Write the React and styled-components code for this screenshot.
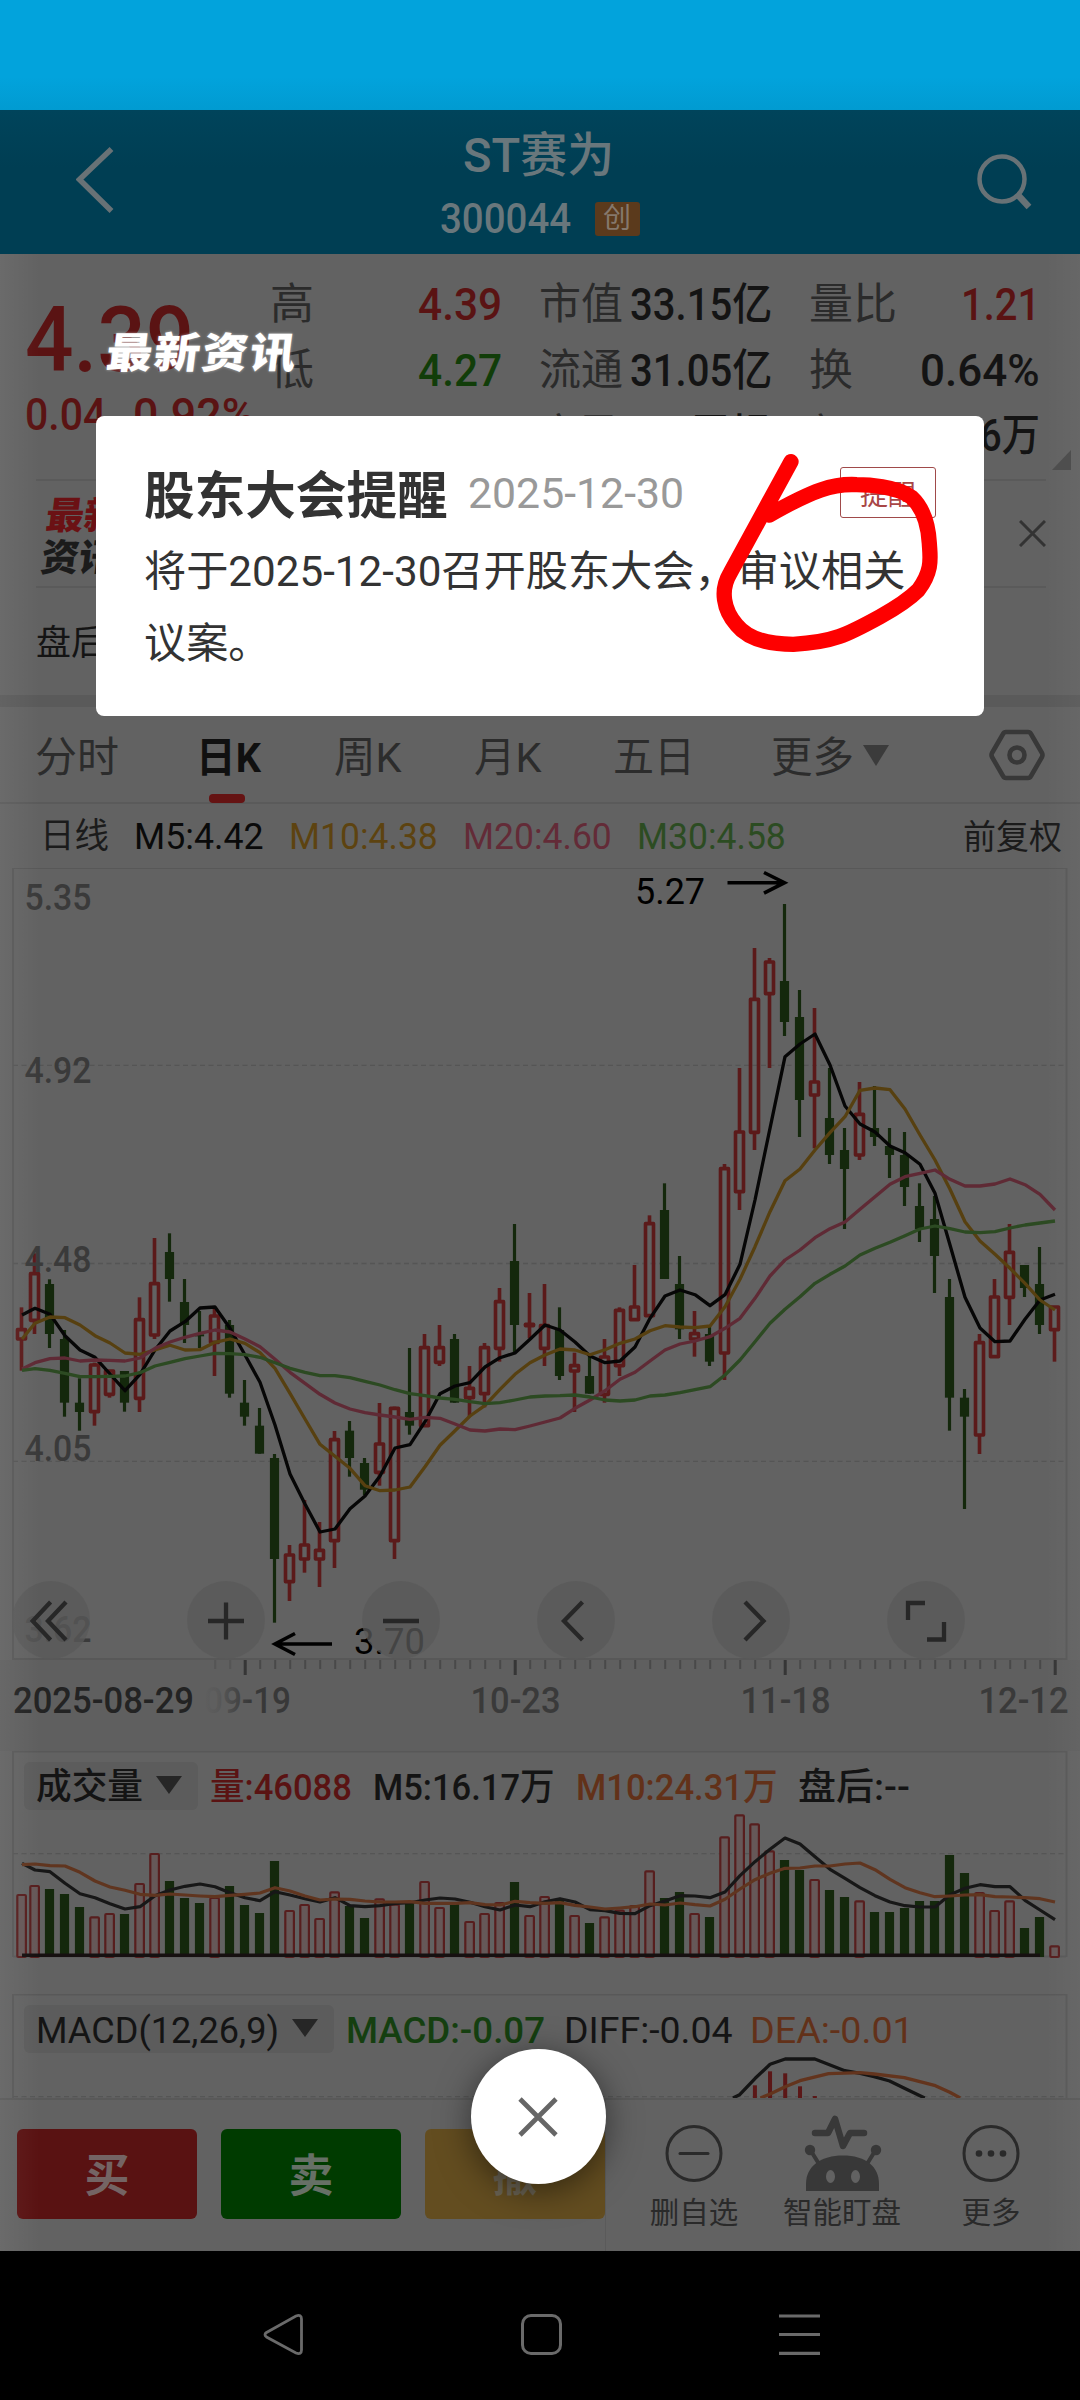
import React, { useLayoutEffect, useRef, useState } from "react";
import styled, { createGlobalStyle } from "styled-components";

const Global = createGlobalStyle`
  * { box-sizing: border-box; }
  body {
    margin: 0;
    background: #000;
    font-family: Roboto, "Noto Sans CJK SC", sans-serif;
  }
`;

const c = {
  bg: "#626262",
  line: "#585858",
  ink: "#141414",
  label: "#2b2b2b",
  red: "#5a1313",
  green: "#113d09",
  candleRed: "#5b1a1a",
  candleGreen: "#14280c",
  orange: "#623119",
};

/* ---------- text that fills a given width ---------- */

const FitBox = styled.span`
  display: inline-block;
  flex: none;
  width: ${(p) => p.$w}px;
  height: ${(p) => p.$size}px;
  font-size: ${(p) => p.$size}px;
  font-weight: ${(p) => p.$weight || 400};
  line-height: 1;
  color: ${(p) => p.$color};
  white-space: nowrap;
`;
const FitInner = styled.span`
  display: inline-block;
  transform-origin: 0 0;
  white-space: pre;
`;
function Fit({ w, size, weight, color, children }) {
  const ref = useRef(null);
  const [k, setK] = useState(1);
  useLayoutEffect(() => {
    if (ref.current) setK(w / ref.current.offsetWidth);
  }, [w, size, children]);
  return (
    <FitBox $w={w} $size={size} $weight={weight} $color={color}>
      <FitInner ref={ref} style={{ transform: `scaleX(${k})` }}>
        {children}
      </FitInner>
    </FitBox>
  );
}

/* ---------- page frame ---------- */

const Screen = styled.div`
  position: relative;
  display: flex;
  flex-direction: column;
  width: 1080px;
  height: 2400px;
  overflow: hidden;
  background: ${c.bg};
`;
const EdgeGlow = styled.div`
  position: absolute;
  inset: 254px 0 149px;
  pointer-events: none;
  background: linear-gradient(
    90deg,
    rgba(255, 255, 255, 0.055),
    rgba(255, 255, 255, 0) 40px,
    rgba(255, 255, 255, 0) 1045px,
    rgba(255, 255, 255, 0.03)
  );
`;
const StatusBar = styled.div`
  flex: none;
  height: 110px;
  background: linear-gradient(#02a3dc 70%, #019bd1);
`;
const Header = styled.header`
  flex: none;
  display: flex;
  justify-content: space-between;
  height: 144px;
  padding: 0 48px 0 76px;
  background: linear-gradient(#00445b, #003e53 40%);
`;
const HeaderIcon = styled.div`
  width: 58px;
  padding-top: ${(p) => p.$top}px;
`;
const TitleBlock = styled.div`
  display: flex;
  flex-direction: column;
  align-items: center;
  gap: 18px;
  padding-top: 22px;
  margin-right: 29px;
`;
const TitleLine = styled.div`
  display: flex;
  padding-right: 3px;
`;
const CodeRow = styled.div`
  display: flex;
  align-items: center;
  gap: 24px;
`;
const BoardBadge = styled.span`
  display: flex;
  align-items: center;
  justify-content: center;
  width: 45px;
  height: 34px;
  border-radius: 3px;
  background: #5b3a1c;
  color: #85786c;
  font-size: 28px;
  line-height: 1;
`;

/* ---------- quote ---------- */

const Quote = styled.section`
  flex: none;
  display: grid;
  grid-template-columns: 208px 232px 233px 231px;
  column-gap: 37px;
  height: 225px;
  padding-left: 25px;
`;
const PriceCol = styled.div`
  display: flex;
  flex-direction: column;
  gap: 7px;
  padding-top: 42px;
`;
const ChangeRow = styled.div`
  display: flex;
  gap: 27px;
`;
const StatCol = styled.div`
  display: flex;
  flex-direction: column;
  gap: 22.5px;
  padding-top: 29px;
`;
const Stat = styled.div`
  display: flex;
  justify-content: space-between;
  height: 43px;
`;

/* ---------- news ---------- */

const NewsRow = styled.section`
  flex: none;
  display: flex;
  justify-content: space-between;
  align-items: center;
  height: 109px;
  margin: 0 34px 0 36px;
  padding-left: 8px;
  border-top: 2px solid #5a5a5a;
  border-bottom: 2px solid #5a5a5a;
`;
const NewsLogo = styled.div`
  display: grid;
  gap: 4px;
  color: ${(p) => p.$color};
  font: 900 38px/1 "Noto Sans CJK SC", sans-serif;
  transform: skewX(-7deg);
  span:first-child { color: #6b1114; }
`;
const AfterHours = styled.div`
  flex: none;
  height: 107px;
  padding: 38px 36px 0;
  color: ${c.ink};
  font-size: 35px;
  line-height: 1;
`;
const Band = styled.div`
  flex: none;
  height: 12px;
  background: #5a5a5a;
`;

/* ---------- tabs ---------- */

const Tabs = styled.nav`
  flex: none;
  position: relative;
  display: flex;
  height: 97px;
  padding: 30px 35px 0 35px;
  border-bottom: 2px solid #5a5a5a;
`;
const Tab = styled.div`
  position: relative;
  display: flex;
  margin-right: ${(p) => p.$gap}px;
`;
const HexIcon = styled.svg`
  display: block;
  flex: none;
  margin-top: -8px;
`;
const Underline = styled.i`
  position: absolute;
  left: 13px;
  top: 57px;
  width: 36px;
  height: 9px;
  border-radius: 4px;
  background: #651313;
`;
const MaRow = styled.div`
  flex: none;
  display: flex;
  gap: ${(p) => p.$gap || 24}px;
  height: 64px;
  padding: 15px 0 0 40px;
`;
const PushRight = styled.span`
  margin: 1px 18px 0 auto;
`;

/* ---------- charts ---------- */

const ChartArea = styled.section`
  flex: none;
  position: relative;
  height: 883px;
`;
const Tools = styled.div`
  position: absolute;
  left: 12px;
  top: 713px;
  display: flex;
  gap: 97px;
`;
const Tool = styled.div`
  display: flex;
  align-items: center;
  justify-content: center;
  width: 78px;
  height: 78px;
  border-radius: 50%;
  background: rgba(90, 90, 90, 0.76);
`;
const SubPanel = styled.section`
  flex: none;
  position: relative;
  height: ${(p) => p.$h}px;
  overflow: hidden;
`;
const SubHead = styled.div`
  position: relative;
  display: flex;
  align-items: flex-start;
  padding: 11px 0 0 24px;
`;
const Chip = styled.div`
  display: flex;
  align-items: center;
  justify-content: space-between;
  width: ${(p) => p.$w}px;
  height: 48px;
  margin-right: 12px;
  padding: 2px 15px 0 12px;
  border-radius: 6px;
  background: #5c5c5c;
  svg { margin-top: -4px; }
`;
const Item = styled.span`
  padding-top: 7px;
  margin-right: ${(p) => p.$gap}px;
`;
const Layer = styled.svg`
  position: absolute;
  left: 0;
  top: 0;
  display: block;
`;

/* ---------- footer ---------- */

const Footer = styled.footer`
  flex: none;
  display: flex;
  height: 153px;
  border-top: 2px solid #595959;
`;
const Trade = styled.div`
  display: flex;
  gap: 24px;
  width: 606px;
  padding: 29px 0 0 17px;
  border-right: 1px solid #5a5a5a;
`;
const TradeButton = styled.div`
  flex: none;
  display: flex;
  align-items: center;
  justify-content: center;
  width: 180px;
  height: 90px;
  padding-top: 5px;
  border-radius: 6px;
  background: ${(p) => p.$bg};
  color: ${(p) => p.$fg};
  font-size: 45px;
  font-weight: 700;
  line-height: 1;
`;
const Action = styled.div`
  display: flex;
  flex-direction: column;
  align-items: center;
  width: ${(p) => p.$w}px;
  margin-left: ${(p) => p.$ml}px;
  color: #2a2a2a;
  font-size: 29.5px;
  line-height: 1;
  white-space: nowrap;
  svg { display: block; margin-bottom: 5px; }
`;
const SystemNav = styled.div`
  flex: none;
  height: 149px;
  display: flex;
  padding: 62px 0 0 263px;
  background: #000;
`;
const NavKey = styled.div`
  width: ${(p) => p.$w}px;
`;

/* ---------- floating layer ---------- */

const Toast = styled.div`
  position: absolute;
  left: 107px;
  top: 327px;
  color: #fff;
  font: 900 46px/1 "Noto Sans CJK SC", sans-serif;
  letter-spacing: 1.8px;
  white-space: nowrap;
  transform: skewX(-7deg) scaleY(0.92);
  text-shadow: 0 0 3px rgba(255, 255, 255, 0.55);
`;
const Dialog = styled.div`
  position: absolute;
  left: 96px;
  top: 416px;
  width: 888px;
  height: 300px;
  padding: 50px 48px 0 48px;
  border-radius: 8px;
  background: #fff;
`;
const DialogHead = styled.div`
  display: flex;
  align-items: center;
  height: 56px;
`;
const DialogTitle = styled.h1`
  margin: 0 20px 0 0;
  padding-top: 6px;
  color: #333;
  font-size: 50.6px;
  font-weight: 600;
  line-height: 1;
`;
const Tag = styled.div`
  display: flex;
  align-items: center;
  justify-content: center;
  width: 96px;
  height: 51px;
  margin: -4px 0 0 auto;
  padding-top: 7px;
  border: 1px solid #a04a4a;
  border-radius: 3px;
  color: #a84646;
  font-size: 28px;
  line-height: 1;
`;
const DialogBody = styled.p`
  margin: 14px -12px 0 0;
  color: #333;
  font-size: 42.2px;
  line-height: 71.5px;
`;
const Scribble = styled.svg`
  position: absolute;
  left: 700px;
  top: 440px;
`;
const Close = styled.div`
  position: absolute;
  left: 471px;
  top: 2049px;
  display: flex;
  align-items: center;
  justify-content: center;
  width: 135px;
  height: 135px;
  padding-right: 2px;
  border-radius: 50%;
  background: #fff;
  box-shadow: 0 6px 34px rgba(0, 0, 0, 0.5);
`;
const Corner = styled.i`
  position: absolute;
  left: 1052px;
  top: 450px;
  border-left: 19px solid transparent;
  border-bottom: 20px solid #4e4e4e;
`;

/* ---------- data: [up, high, open/close top, open/close bottom, low] ---------- */

const candles = [
  [1, 262, 326, 360, 452], [1, 100, 158, 304, 342], [0, 178, 192, 342, 384], [0, 330, 357, 548, 590],
  [0, 475, 548, 576, 632], [1, 428, 432, 578, 617], [1, 450, 450, 526, 533], [0, 453, 453, 548, 575],
  [1, 232, 296, 538, 576], [1, 54, 188, 348, 357], [0, 40, 96, 177, 245], [0, 177, 246, 315, 369],
  [0, 273, 343, 348, 384], [1, 262, 285, 370, 468], [0, 300, 315, 521, 533], [0, 480, 548, 590, 617],
  [0, 564, 617, 701, 701], [0, 702, 714, 1017, 1208], [1, 975, 1002, 1088, 1143], [1, 840, 972, 1020, 1058],
  [1, 906, 988, 1020, 1101], [1, 633, 656, 965, 1044], [0, 603, 632, 714, 770], [0, 714, 729, 809, 825],
  [1, 549, 669, 760, 797], [1, 560, 562, 965, 1017], [0, 384, 576, 617, 644], [1, 342, 380, 620, 620],
  [1, 315, 380, 430, 438], [0, 342, 357, 548, 548], [1, 438, 502, 536, 590], [1, 369, 380, 524, 562],
  [1, 204, 242, 388, 425], [0, 12, 123, 315, 398], [1, 219, 310, 320, 355], [1, 192, 314, 388, 438],
  [0, 262, 330, 468, 480], [1, 398, 434, 456, 576], [0, 408, 468, 521, 521], [1, 357, 408, 526, 548],
  [1, 262, 268, 440, 468], [1, 135, 258, 302, 302], [1, -14, 8, 290, 290], [0, -110, -30, 177, 177],
  [0, 108, 192, 328, 357], [1, 273, 338, 360, 410], [0, 315, 342, 425, 438], [1, -168, -157, 402, 480],
  [1, -456, -267, -82, -30], [1, -816, -665, -260, -210], [1, -786, -777, -676, -456], [0, -948, -717, -594, -552],
  [0, -690, -609, -360, -249], [1, -636, -417, -372, -215], [0, -456, -306, -195, -168], [0, -276, -210, -153, 27],
  [1, -414, -320, -192, -180], [0, -402, -276, -249, -222], [0, -276, -222, -195, -126], [0, -264, -195, -99, -42],
  [0, -110, -42, 27, 66], [0, -72, -3, 108, 219], [0, 177, 231, 533, 632], [0, 507, 533, 590, 867],
  [1, 342, 365, 648, 702], [1, 177, 228, 413, 413], [1, 12, 94, 235, 315], [0, 135, 135, 204, 231],
  [0, 81, 192, 315, 342], [1, 258, 258, 332, 425],
];
const ma5 = [285, 265, 283, 347, 390, 412, 462, 512, 463, 390, 333, 305, 264, 261, 325, 405, 487, 615, 762, 852, 936, 927, 866, 828, 768, 684, 674, 605, 521, 498, 488, 441, 413, 399, 358, 315, 330, 366, 408, 428, 423, 381, 295, 228, 210, 224, 257, 224, 133, -60, -275, -490, -528, -558, -465, -342, -288, -264, -222, -202, -167, -80, 75, 232, 324, 365, 363, 298, 240, 223];
const ma10 = [357, 310, 291, 293, 315, 347, 369, 399, 403, 390, 376, 390, 389, 367, 357, 370, 398, 445, 520, 597, 673, 709, 745, 797, 812, 810, 801, 740, 676, 632, 588, 556, 508, 463, 428, 405, 387, 390, 404, 389, 370, 357, 332, 317, 321, 323, 318, 260, 178, 80, -25, -118, -153, -210, -262, -310, -389, -396, -391, -333, -255, -180, -92, 5, 63, 103, 145, 190, 240, 270];
const ma20 = [447, 428, 416, 414, 423, 420, 421, 423, 414, 385, 366, 352, 340, 330, 336, 357, 380, 418, 457, 490, 523, 549, 567, 578, 585, 591, 598, 592, 595, 612, 630, 633, 627, 629, 618, 606, 594, 565, 540, 512, 478, 457, 423, 390, 372, 363, 350, 325, 295, 235, 168, 120, 90, 53, 26, 6, -32, -70, -107, -130, -140, -150, -122, -102, -102, -108, -123, -106, -77, -30];
const ma30 = [451, 446, 451, 460, 470, 470, 469, 468, 458, 438, 427, 416, 408, 400, 401, 404, 412, 428, 445, 457, 467, 467, 473, 484, 495, 509, 521, 527, 534, 538, 545, 551, 548, 540, 531, 528, 527, 525, 531, 540, 543, 540, 528, 525, 518, 509, 500, 465, 420, 365, 310, 268, 230, 190, 163, 138, 105, 85, 67, 47, 27, 18, 26, 36, 38, 35, 24, 15, 9, 3];

const volumes = [465, 438, 447, 462, 501, 532, 522, 522, 432, 342, 423, 474, 489, 474, 438, 495, 519, 363, 513, 495, 537, 457, 498, 534, 478, 494, 486, 426, 504, 492, 546, 522, 489, 426, 528, 471, 480, 528, 549, 532, 512, 498, 394, 474, 456, 522, 531, 292, 226, 253, 334, 360, 390, 420, 450, 471, 484, 516, 516, 504, 483, 483, 345, 399, 459, 513, 484, 564, 531, 619];
const vol5 = [370, 390, 395, 430, 461, 473, 491, 507, 500, 467, 450, 439, 432, 440, 458, 473, 482, 455, 465, 476, 486, 473, 497, 500, 497, 490, 488, 480, 474, 477, 487, 500, 510, 495, 500, 485, 476, 486, 509, 512, 520, 521, 497, 483, 467, 468, 473, 456, 407, 365, 328, 294, 312, 350, 388, 415, 443, 467, 486, 497, 501, 501, 464, 445, 434, 440, 440, 481, 510, 539];
const vol10 = [374, 372, 377, 378, 397, 423, 441, 451, 463, 466, 462, 465, 468, 470, 466, 463, 459, 443, 453, 468, 480, 477, 478, 483, 486, 486, 485, 490, 490, 490, 488, 494, 495, 484, 488, 490, 488, 496, 501, 507, 504, 500, 492, 495, 489, 494, 498, 478, 447, 419, 400, 385, 384, 378, 378, 372, 369, 389, 418, 443, 458, 470, 468, 465, 464, 470, 471, 473, 476, 486];

const px = (i) => (i === 0 ? 21.5 : 19.5 + 15 * i);
const py = (v) => (v + 1056) / 3;
const vy = (v) => (v - 33) / 3;
const toPoints = (arr, f) => arr.map((v, i) => `${px(i) + 0.5},${f(v).toFixed(1)}`).join(" ");

function Label({ x, y, w, size = 36.5, weight = 500, fill = "#3a3a3a", children }) {
  return (
    <text x={x} y={y} fontSize={size} fontWeight={weight} fill={fill} textLength={w} lengthAdjust="spacingAndGlyphs">
      {children}
    </text>
  );
}

function Grid({ y }) {
  return <line x1="13" x2="1066" y1={y} y2={y} stroke="#555" strokeWidth="1.3" strokeDasharray="5 3.5" />;
}

function Candle({ i, d }) {
  const [up, hi, top, bot, lo] = d;
  const x = px(i);
  if (!up)
    return (
      <g fill={c.candleGreen}>
        <rect x={x - 1.6} y={py(hi)} width="3.2" height={py(lo) - py(hi)} />
        <rect x={x - 4.6} y={py(top)} width="9.2" height={Math.max(2, py(bot) - py(top))} />
      </g>
    );
  return (
    <g stroke={c.candleRed} strokeWidth="3.6" fill="none" strokeLinejoin="round">
      <line x1={x} x2={x} y1={py(hi)} y2={py(top)} />
      <line x1={x} x2={x} y1={py(bot)} y2={py(lo)} />
      <rect x={x - 4} y={py(top) + 1} width="8" height={Math.max(1, py(bot) - py(top) - 2)} />
    </g>
  );
}

function KLine() {
  const ticks = [];
  for (let i = 13; i <= 69; i++) {
    const major = (i - 15) % 18 === 0;
    ticks.push(
      <line
        key={i}
        x1={px(i) + 0.7}
        x2={px(i) + 0.7}
        y1="792"
        y2={major ? 807 : 801}
        stroke={major ? "#363636" : "#494949"}
        strokeOpacity={i < 15 ? 0.45 : 1}
        strokeWidth={major ? 3 : 2}
      />
    );
  }
  return (
    <Layer width="1080" height="883" fontFamily="Roboto, sans-serif">
      <defs>
        <linearGradient id="fade" x1="205" x2="250" y1="0" y2="0" gradientUnits="userSpaceOnUse">
          <stop offset="0" stopColor="#383838" stopOpacity="0.02" />
          <stop offset="0.3" stopColor="#383838" stopOpacity="0.15" />
          <stop offset="1" stopColor="#383838" />
        </linearGradient>
      </defs>
      <rect x="0" y="792" width="1080" height="91" fill="#5f5f5f" />
      <rect x="13" y="0" width="1053.5" height="791" fill="none" stroke={c.line} strokeWidth="2" />
      <Grid y={197.3} />
      <Grid y={395.5} />
      <Grid y={593.3} />
      {candles.map((d, i) => <Candle key={i} i={i} d={d} />)}
      <Label x={24.5} y={42} w={67}>5.35</Label>
      <Label x={24.5} y={214.7} w={67}>4.92</Label>
      <Label x={24.5} y={403.7} w={67}>4.48</Label>
      <Label x={24.5} y={592.7} w={67}>4.05</Label>
      <Label x={24.5} y={773.7} w={67}>3.62</Label>
      <g fill="none" strokeWidth="3.3" strokeLinejoin="round">
        <polyline points={toPoints(ma5, py)} stroke="#060606" />
        <polyline points={toPoints(ma10, py)} stroke="#574010" />
        <polyline points={toPoints(ma20, py)} stroke="#5f2a35" />
        <polyline points={toPoints(ma30, py)} stroke="#2c4a22" />
      </g>
      <g stroke="#000" strokeWidth="3.6" fill="none">
        <path d="M727.5 14.7H783M764 4.500l20.500 10.200L764 25.200" />
        <path d="M332 776H276M295 765.500L275 776l20 10.500" />
      </g>
      <Label x={635} y={36} w={70} size={36} weight={400} fill="#000">5.27</Label>
      <Label x={354} y={786} w={71} size={36} weight={400} fill="#000">3.70</Label>
      {ticks}
      <Label x={13} y={844.5} w={181} size={36} fill="#232323">2025-08-29</Label>
      <Label x={204} y={844.5} w={87} size={36} fill="url(#fade)">09-19</Label>
      <Label x={470.5} y={844.5} w={90} size={36}>10-23</Label>
      <Label x={740.5} y={844.5} w={90} size={36}>11-18</Label>
      <Label x={978.5} y={844.5} w={90} size={36}>12-12</Label>
    </Layer>
  );
}

const toolPaths = [
  "M38.600 21L20.700 40L38.600 59M54 21L36 40L54 59",
  "M39 21.500V58.500M21 40H57",
  "M21 40H57",
  "M45.500 21L27 40L45.500 59",
  "M33 21L51.500 40L33 59",
  "M38 22H21V39M57 41V58.500H40",
];

function Volume() {
  return (
    <Layer width="1080" height="243">
      <path d="M13 206V0.500H1066.500V206" fill="none" stroke={c.line} strokeWidth="2" />
      <line x1="13" x2="1066" y1="205.500" y2="205.500" stroke={c.line} strokeWidth="2" />
      <Grid y={102.700} />
      {volumes.map((v, i) => {
        const up = candles[i][0];
        const y = vy(v);
        return up ? (
          <rect key={i} x={px(i) - 4.2} y={y} width="8.6" height={206 - y} rx="1" fill="#665858" stroke="#571e1e" strokeWidth="2.2" />
        ) : (
          <rect key={i} x={px(i) - 4.6} y={y} width="9.2" height={206 - y} fill={c.candleGreen} />
        );
      })}
      <line x1="22" x2="1040" y1="204.300" y2="204.300" stroke="#161010" strokeWidth="3.500" />
      <g fill="none" strokeWidth="3.200" strokeLinejoin="round">
        <polyline points={toPoints(vol5, vy)} stroke="#171717" />
        <polyline points={toPoints(vol10, vy)} stroke="#60351f" />
      </g>
    </Layer>
  );
}

const mx = (x) => x / 2.9037 + 540;
const my = (y) => (y - 762) / 3;
const diff = [[560, 1074], [580, 1064], [625, 1015], [668, 973], [712, 957], [798, 957], [885, 992], [930, 1000], [970, 1010], [1015, 1023], [1058, 1045], [1117, 1074]];
const dea = [[640, 1074], [668, 1062], [712, 1040], [755, 1022], [838, 1001], [930, 998], [970, 1002], [1058, 1013], [1148, 1037], [1190, 1057], [1220, 1074]];
const hist = [[624, 1036], [668, 994], [712, 1000], [755, 1039], [798, 1068]];
const macdPoints = (a) => a.map(([x, y]) => `${mx(x).toFixed(1)},${my(y).toFixed(1)}`).join(" ");

function Macd() {
  return (
    <Layer width="1080" height="104">
      <path d="M13 105V0.500H1066.500V105" fill="none" stroke={c.line} strokeWidth="2" />
      <Grid y={102.700} />
      {hist.map(([x, y]) => (
        <rect key={x} x={mx(x) - 2} y={my(y)} width="4" height={104 - my(y)} fill="#5b1717" />
      ))}
      <g fill="none" strokeWidth="3.300" strokeLinejoin="round">
        <polyline points={macdPoints(diff)} stroke="#141414" />
        <polyline points={macdPoints(dea)} stroke="#63341d" />
      </g>
    </Layer>
  );
}

const Caret = ({ color = "#262626" }) => (
  <svg width="28" height="20" viewBox="0 0 28 20">
    <path d="M1 1H27L14 19Z" fill={color} />
  </svg>
);

export default function App() {
  return (
    <>
      <Global />
      <Screen>
        <StatusBar />
        <Header>
          <HeaderIcon $top={37}>
            <svg width="40" height="66" fill="none" stroke="#687276" strokeWidth="5.500">
              <path d="M35.500 2L3.500 32.500L35.500 64" />
            </svg>
          </HeaderIcon>
          <TitleBlock>
            <TitleLine><Fit w={151} size={48} weight={500} color="#69777c">ST赛为</Fit></TitleLine>
            <CodeRow>
              <Fit w={131} size={42} weight={500} color="#69777c">300044</Fit>
              <BoardBadge>创</BoardBadge>
            </CodeRow>
          </TitleBlock>
          <HeaderIcon $top={44}>
            <svg width="58" height="58" fill="none" stroke="#687276" strokeWidth="4.500">
              <circle cx="28" cy="25" r="22.500" />
              <path d="M44 41L55 53" strokeWidth="6.500" />
            </svg>
          </HeaderIcon>
        </Header>

        <Quote>
          <PriceCol>
            <Fit w={169} size={90} weight={500} color={c.red}>4.39</Fit>
            <ChangeRow>
              <Fit w={81} size={44} weight={500} color={c.red}>0.04</Fit>
              <Fit w={122} size={44} weight={500} color={c.red}>0.92%</Fit>
            </ChangeRow>
          </PriceCol>
          <StatCol>
            <Stat><Fit w={44} size={43} color={c.label}>高</Fit><Fit w={84} size={44} weight={500} color={c.red}>4.39</Fit></Stat>
            <Stat><Fit w={44} size={43} color={c.label}>低</Fit><Fit w={84} size={44} weight={500} color={c.green}>4.27</Fit></Stat>
          </StatCol>
          <StatCol>
            <Stat><Fit w={84} size={43} color={c.label}>市值</Fit><Fit w={142} size={44} weight={500} color={c.ink}>33.15亿</Fit></Stat>
            <Stat><Fit w={84} size={43} color={c.label}>流通</Fit><Fit w={142} size={44} weight={500} color={c.ink}>31.05亿</Fit></Stat>
            <Stat><Fit w={84} size={43} color={c.label}>市盈</Fit><Fit w={82} size={44} weight={500} color={c.ink}>亏损</Fit></Stat>
          </StatCol>
          <StatCol>
            <Stat><Fit w={88} size={43} color={c.label}>量比</Fit><Fit w={79} size={44} weight={500} color={c.red}>1.21</Fit></Stat>
            <Stat><Fit w={44} size={43} color={c.label}>换</Fit><Fit w={120} size={44} weight={500} color={c.ink}>0.64%</Fit></Stat>
            <Stat><Fit w={44} size={43} color={c.label}>额</Fit><Fit w={125} size={44} weight={500} color={c.ink}>2006万</Fit></Stat>
          </StatCol>
        </Quote>

        <NewsRow>
          <NewsLogo $color="#1b1b1b"><span>最新</span><span>资讯</span></NewsLogo>
          <svg width="27" height="27" fill="none" stroke="#333" strokeWidth="3">
            <path d="M1 1L26 26M26 1L1 26" />
          </svg>
        </NewsRow>
        <AfterHours>盘后</AfterHours>
        <Band />

        <Tabs>
          <Tab $gap={77}><Fit w={84} size={41.5} color="#2c2c2c">分时</Fit></Tab>
          <Tab $gap={73}><Fit w={65} size={41.500} weight={700} color="#101010">日K</Fit><Underline /></Tab>
          <Tab $gap={72}><Fit w={68} size={41.5} color="#2c2c2c">周K</Fit></Tab>
          <Tab $gap={71}><Fit w={68} size={41.5} color="#2c2c2c">月K</Fit></Tab>
          <Tab $gap={76}><Fit w={82} size={41.5} color="#2c2c2c">五日</Fit></Tab>
          <Tab $gap={8}><Fit w={83} size={41.5} color="#2c2c2c">更多</Fit></Tab>
          <Tab $gap={99}>
            <svg width="28" height="34"><path d="M1 8H27L14 29Z" fill="#3b3b3b" /></svg>
          </Tab>
          <HexIcon width="56" height="52" viewBox="0 0 56 52" fill="none" stroke="#383838" strokeWidth="4.6" strokeLinejoin="round">
            <path d="M17 3H39Q41 3 42 5L53 24Q54 26 53 28L42 47Q41 49 39 49H17Q15 49 14 47L3 28Q2 26 3 24L14 5Q15 3 17 3Z" />
            <circle cx="28" cy="26" r="7.5" />
          </HexIcon>
        </Tabs>

        <MaRow $gap={25}>
          <Fit w={69} size={35} color="#1b1b1b">日线</Fit>
          <Fit w={130} size={36} color="#0a0a0a">M5:4.42</Fit>
          <Fit w={149} size={36} color="#5d4310">M10:4.38</Fit>
          <Fit w={149} size={36} color="#632b37">M20:4.60</Fit>
          <Fit w={149} size={36} color="#2c4c22">M30:4.58</Fit>
          <PushRight><Fit w={99} size={34} color="#1b1b1b">前复权</Fit></PushRight>
        </MaRow>

        <ChartArea>
          <KLine />
          <Tools>
            {toolPaths.map((d) => (
              <Tool key={d}>
                <svg width="78" height="78" fill="none" stroke="#272727" strokeWidth="4.300"><path d={d} /></svg>
              </Tool>
            ))}
          </Tools>
        </ChartArea>

        <SubPanel $h={243}>
          <Volume />
          <SubHead>
            <Chip $w={174}><Fit w={107} size={36} weight={500} color={c.ink}>成交量</Fit><Caret /></Chip>
            <Item $gap={21}><Fit w={142} size={37} weight={500} color={c.red}>量:46088</Fit></Item>
            <Item $gap={21}><Fit w={182} size={37} weight={500} color={c.ink}>M5:16.17万</Fit></Item>
            <Item $gap={20}><Fit w={202} size={37} weight={500} color={c.orange}>M10:24.31万</Fit></Item>
            <Item $gap={0}><Fit w={112} size={37} weight={500} color={c.ink}>盘后:--</Fit></Item>
          </SubHead>
        </SubPanel>

        <SubPanel $h={104}>
          <Macd />
          <SubHead>
            <Chip $w={310}><Fit w={243} size={37} weight={450} color={c.ink}>MACD(12,26,9)</Fit><Caret /></Chip>
            <Item $gap={19}><Fit w={199} size={37} weight={500} color="#153f10">MACD:-0.07</Fit></Item>
            <Item $gap={17}><Fit w={169} size={37} weight={450} color={c.ink}>DIFF:-0.04</Fit></Item>
            <Item $gap={0}><Fit w={164} size={37} weight={450} color={c.orange}>DEA:-0.01</Fit></Item>
          </SubHead>
        </SubPanel>

        <Footer>
          <Trade>
            <TradeButton $bg="#591212" $fg="#746464">买</TradeButton>
            <TradeButton $bg="#003b00" $fg="#667066">卖</TradeButton>
            <TradeButton $bg="#634d20" $fg="#6a6353">撤</TradeButton>
          </Trade>
          <Action $w={96} $ml={40}>
            <svg width="96" height="94" fill="none" stroke="#2a2a2a" strokeWidth="3">
              <circle cx="48" cy="53.500" r="27" />
              <path d="M34 53.500H62" strokeLinecap="round" />
            </svg>
            删自选
          </Action>
          <Action $w={120} $ml={40}>
            <svg width="120" height="94" fill="none" stroke="#383838" strokeLinecap="round" strokeLinejoin="round">
              <path d="M33 33H46L53 19L61 46L68 33H82" strokeWidth="6.500" />
              <path d="M29 51L37 64M93 51L85 64" strokeWidth="4" />
              <circle cx="28" cy="50" r="5.200" fill="#383838" stroke="none" />
              <circle cx="94" cy="50" r="5.200" fill="#383838" stroke="none" />
              <path d="M24 91V84C24 66 39 55.500 61 55.500S97 66 97 84V91Z" fill="#383838" stroke="none" />
              <ellipse cx="48.500" cy="76.500" rx="4.500" ry="6.500" fill="#626262" stroke="none" />
              <ellipse cx="73.500" cy="76.500" rx="4.500" ry="6.500" fill="#626262" stroke="none" />
            </svg>
            智能盯盘
          </Action>
          <Action $w={60} $ml={59}>
            <svg width="60" height="94" fill="none" stroke="#2a2a2a" strokeWidth="3">
              <circle cx="30" cy="53.500" r="27" />
              <g fill="#2a2a2a" stroke="none">
                <circle cx="18" cy="53.500" r="3.300" />
                <circle cx="30" cy="53.500" r="3.300" />
                <circle cx="42" cy="53.500" r="3.300" />
              </g>
            </svg>
            更多
          </Action>
        </Footer>

        <SystemNav>
          <NavKey $w={257}>
            <svg width="42" height="44" fill="none" stroke="#6a6a6a" strokeWidth="2.800">
              <path d="M3.500 19.500L33 3Q38.500 1 38.500 6V37Q38.500 42 33 40L3.500 24Q0.500 21.700 3.500 19.500Z" />
            </svg>
          </NavKey>
          <NavKey $w={259}>
            <svg width="44" height="44" fill="none" stroke="#6a6a6a" strokeWidth="3">
              <rect x="2.500" y="2.500" width="38" height="38" rx="8.500" />
            </svg>
          </NavKey>
          <NavKey $w={44}>
            <svg width="44" height="44" fill="none" stroke="#6a6a6a" strokeWidth="3.200">
              <path d="M0 3H41M0 21.500H41M0 40.300H41" />
            </svg>
          </NavKey>
        </SystemNav>

        <EdgeGlow />
        <Corner />
        <Toast>最新资讯</Toast>
        <Dialog>
          <DialogHead>
            <DialogTitle>股东大会提醒</DialogTitle>
            <Fit w={216} size={42} color="#999">2025-12-30</Fit>
            <Tag>提醒</Tag>
          </DialogHead>
          <DialogBody>将于2025-12-30召开股东大会，审议相关<br />议案。</DialogBody>
        </Dialog>
        <Scribble width="260" height="220" viewBox="0 0 780 660" fill="none" stroke="#fe0000" strokeWidth="46" strokeLinecap="round" strokeLinejoin="round">
          <path d="M273 65L90 400C60 450 70 510 110 555C150 605 220 613 280 613C400 606 440 585 540 530C600 497 635 470 655 450C700 390 690 350 688 310C684 240 665 200 635 172C590 138 500 134 470 134C400 130 340 150 208 225" />
        </Scribble>
        <Close>
          <svg width="42" height="42" fill="none" stroke="#666" strokeWidth="4.700">
            <path d="M3 3L39 39M39 3L3 39" />
          </svg>
        </Close>
      </Screen>
    </>
  );
}
